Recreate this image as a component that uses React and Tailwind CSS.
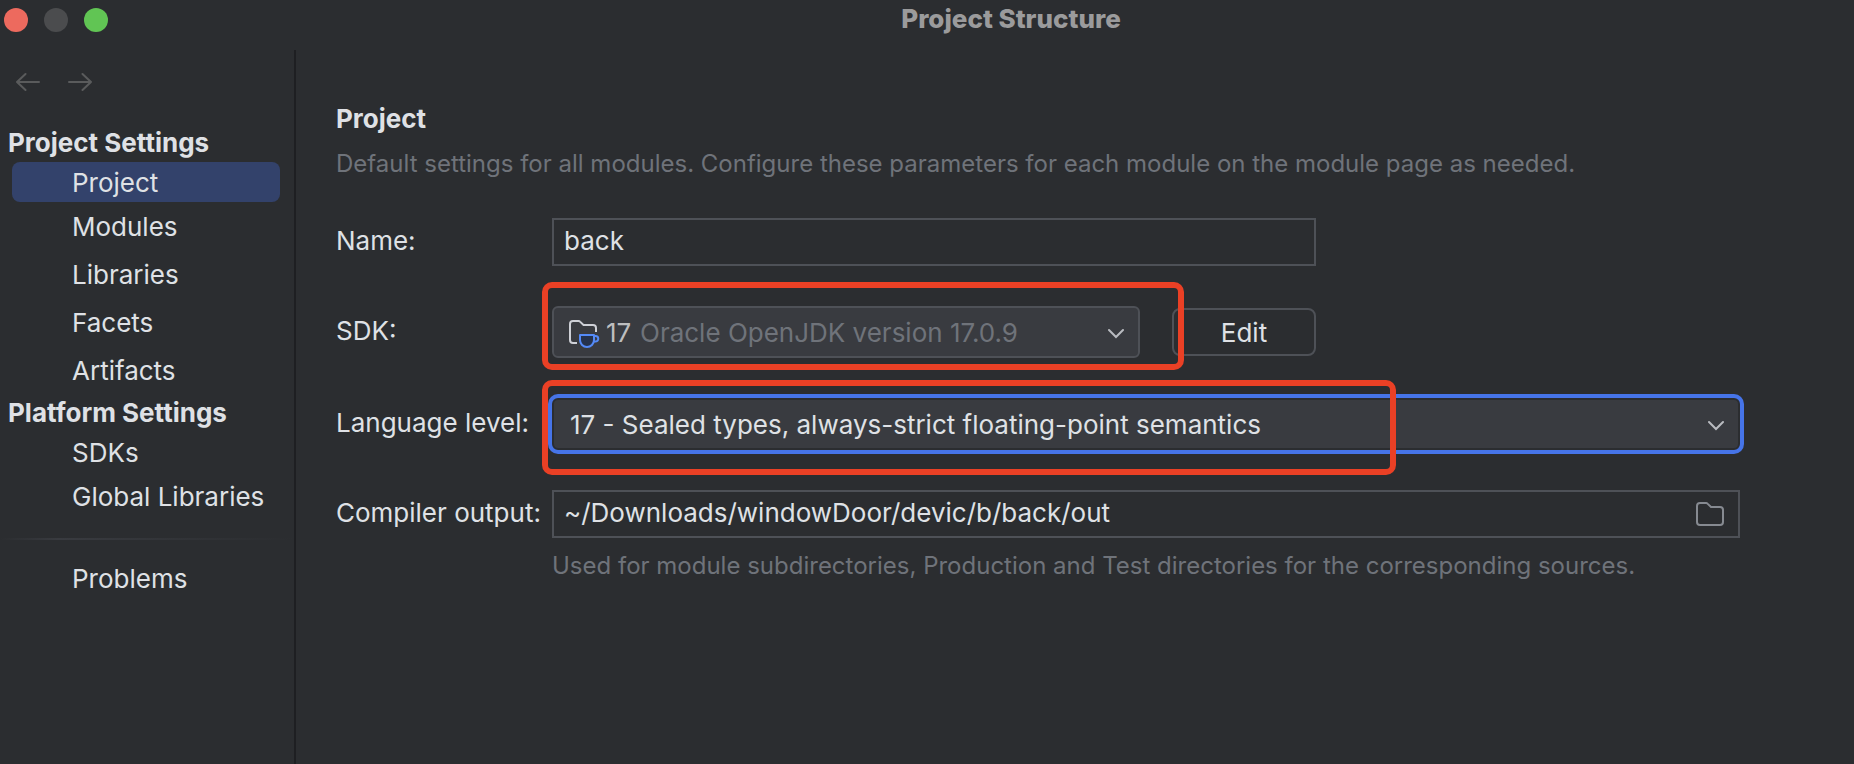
import React, { useState } from "react";

const projectItems = ["Modules", "Libraries", "Facets", "Artifacts"];
const platformItems = ["SDKs", "Global Libraries"];

function Chevron() {
  return (
    <svg
      className="pointer-events-none absolute inset-y-0 right-4 my-auto h-4 w-4"
      viewBox="0 0 16 16"
      fill="none"
      stroke="#b9bbc0"
      strokeWidth="2"
      strokeLinecap="round"
    >
      <path d="M1 6 8 13l7-7" />
    </svg>
  );
}

function Arrow({ d }) {
  return (
    <svg
      className="h-5 w-6"
      viewBox="0 0 24 20"
      fill="none"
      stroke="#5a5b5c"
      strokeWidth="2"
      strokeLinecap="round"
      strokeLinejoin="round"
    >
      <path d={d} />
    </svg>
  );
}

function SdkIcon() {
  return (
    <svg className="h-8 w-8" viewBox="0 0 32 32" fill="none">
      <path
        d="M9 27H5a3 3 0 0 1-3-3V8a3 3 0 0 1 3-3h5.500a2 2 0 0 1 1.500.600L15.500 9H25a3 3 0 0 1 3 3v4"
        stroke="#ced0d6"
        strokeWidth="2"
      />
      <path
        d="M12 19h14v5a7 7 0 0 1-14 0z"
        fill="#25324d"
        stroke="#548af7"
        strokeWidth="2"
        strokeLinejoin="round"
      />
      <path
        d="M26 20h1.500a2.500 2.500 0 0 1 0 5.500H26"
        stroke="#548af7"
        strokeWidth="2"
      />
    </svg>
  );
}

function NavItem({ label, className }) {
  return (
    <li>
      <a href="#" className={`flex items-center pl-[72px] pt-[2px] ${className}`}>
        {label}
      </a>
    </li>
  );
}

export default function App() {
  const [name, setName] = useState("back");
  const [output, setOutput] = useState("~/Downloads/windowDoor/devic/b/back/out");

  return (
    <div className="flex min-h-screen flex-col bg-[#2b2d30] font-['Inter',sans-serif] text-[26px] leading-8 text-[#dfe1e5]">
      {/* Title bar */}
      <header className="flex h-[50px] items-start pl-1 pt-2">
        <div className="flex w-[164px] shrink-0 gap-4">
          <button aria-label="Close" className="h-6 w-6 rounded-full bg-[#ed6a5e]" />
          <button aria-label="Minimize" className="h-6 w-6 rounded-full bg-[#4b4c4e]" />
          <button aria-label="Zoom" className="h-6 w-6 rounded-full bg-[#61c554]" />
        </div>
        <h1 className="flex-1 text-center font-extrabold leading-[22px] text-[#9b9b9c]">
          Project Structure
        </h1>
      </header>

      <div className="flex flex-1">
        {/* Sidebar */}
        <nav className="w-[296px] shrink-0 border-r-2 border-[#1e1f22] pt-[22px]">
          <div className="flex gap-7 pl-4">
            <button aria-label="Back" className="block">
              <Arrow d="M23 10H1M9.500 2 1 10l8.500 8" />
            </button>
            <button aria-label="Forward" className="block">
              <Arrow d="M1 10h22M14.500 2 23 10l-8.500 8" />
            </button>
          </div>

          <h2 className="mt-[30px] flex h-10 items-center pl-2 pt-[2px] font-bold">
            Project Settings
          </h2>
          <div className="ml-3 mr-[14px]">
            <a
              href="#"
              aria-current="page"
              className="flex h-10 items-center rounded-lg bg-[#33426b] pl-[60px] pt-[2px]"
            >
              Project
            </a>
          </div>
          <ul>
            {projectItems.map((item) => (
              <NavItem key={item} label={item} className="h-12" />
            ))}
          </ul>

          <h2 className="flex h-9 items-center pl-2 pt-[2px] font-bold">
            Platform Settings
          </h2>
          <ul>
            {platformItems.map((item) => (
              <NavItem key={item} label={item} className="h-11" />
            ))}
          </ul>

          <div className="mb-[14px] mt-5 h-[2px] bg-linear-to-r from-transparent via-[#393b40] via-20% to-transparent" />
          <ul>
            <NavItem label="Problems" className="h-12" />
          </ul>
        </nav>

        {/* Project page */}
        <main className="min-w-0 flex-1 pl-10 pr-[114px] pt-[53px]">
          <h2 className="font-bold">Project</h2>
          <p className="mt-[13px] whitespace-nowrap text-2xl leading-8 text-[#6f737a]">
            Default settings for all modules. Configure these parameters for
            each module on the module page as needed.
          </p>

          <form className="mt-[38px] flex flex-col gap-10">
            <div className="flex items-center">
              <label htmlFor="name" className="w-[216px] shrink-0 pb-[2px]">
                Name:
              </label>
              <input
                id="name"
                value={name}
                onChange={(e) => setName(e.target.value)}
                className="h-12 w-[764px] border-2 border-[#4e5157] bg-transparent px-[10px] pb-1 outline-none"
              />
            </div>

            <div className="flex items-center">
              <label htmlFor="sdk" className="w-[216px] shrink-0 pb-[2px]">
                SDK:
              </label>
              <div className="relative flex items-center gap-8">
                <div className="relative">
                  <select
                    id="sdk"
                    className="block h-[52px] w-[588px] appearance-none rounded-md border-2 border-[#4e5157] bg-[#393b40] pl-[86px] pt-[2px] text-[#6f737a] outline-none"
                  >
                    <option>Oracle OpenJDK version 17.0.9</option>
                  </select>
                  <div className="pointer-events-none absolute inset-y-0 left-4 flex items-center gap-[6px] text-[#bdbebf]">
                    <SdkIcon />
                    <span className="pt-[2px]">17</span>
                  </div>
                  <Chevron />
                </div>
                <button
                  type="button"
                  className="h-12 w-36 rounded-lg border-2 border-[#4e5157] pt-[2px]"
                >
                  Edit
                </button>
                {/* Highlight over the SDK box */}
                <div className="pointer-events-none absolute -left-[10px] -top-6 h-[88px] w-[642px] rounded-[10px] border-6 border-[#ea4025]" />
              </div>
            </div>

            <div className="flex items-center">
              <label htmlFor="level" className="w-[216px] shrink-0 pb-[2px]">
                Language level:
              </label>
              <div className="relative flex-1">
                <select
                  id="level"
                  className="block h-[52px] w-full appearance-none rounded-md border-2 border-[#2b2d30] bg-[#393b40] pl-4 pt-[2px] outline-none ring-4 ring-[#4674e8]"
                >
                  <option>
                    17 - Sealed types, always-strict floating-point semantics
                  </option>
                </select>
                <Chevron />
                {/* Highlight over the language level */}
                <div className="pointer-events-none absolute -left-[10px] -top-[18px] h-[95px] w-[854px] rounded-[10px] border-6 border-[#ea4025]" />
              </div>
            </div>

            <div className="flex items-center">
              <label htmlFor="output" className="w-[216px] shrink-0 pb-[2px]">
                Compiler output:
              </label>
              <div className="flex h-12 flex-1 items-center border-2 border-[#4e5157] pr-[14px]">
                <input
                  id="output"
                  value={output}
                  onChange={(e) => setOutput(e.target.value)}
                  className="h-full min-w-0 flex-1 bg-transparent px-[10px] pb-1 outline-none"
                />
                <button type="button" aria-label="Browse">
                  <svg
                    className="block h-6 w-7"
                    viewBox="0 0 28 24"
                    fill="none"
                    stroke="#868a91"
                    strokeWidth="2"
                  >
                    <path d="M1 20V4a3 3 0 0 1 3-3h6a2 2 0 0 1 1.500.600L15 5h9a3 3 0 0 1 3 3v12a3 3 0 0 1-3 3H4a3 3 0 0 1-3-3z" />
                  </svg>
                </button>
              </div>
            </div>
          </form>
          <p className="mt-3 whitespace-nowrap pl-[216px] text-2xl leading-8 text-[#6f737a]">
            Used for module subdirectories, Production and Test directories for
            the corresponding sources.
          </p>
        </main>
      </div>
    </div>
  );
}
